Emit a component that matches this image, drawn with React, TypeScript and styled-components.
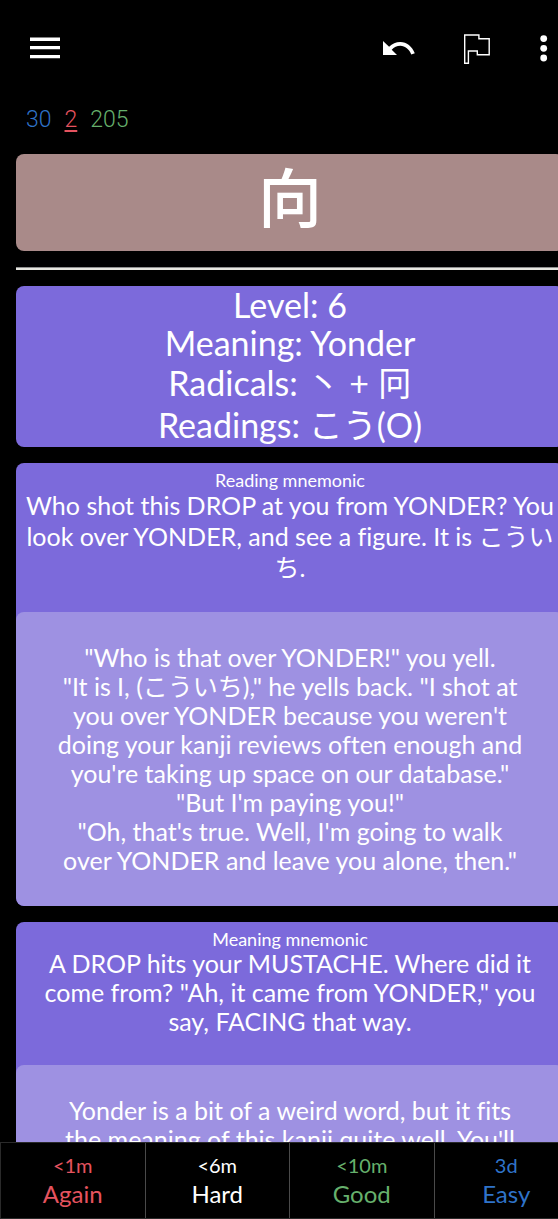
import React from "react";
import styled, { createGlobalStyle } from "styled-components";

const colors = {
  page: "#000000",
  text: "#ffffff",
  kanji: "#a98a89",
  card: "#7c6adb",
  note: "#9e91e2",
  red: "#e5535f",
  green: "#66b06c",
  blue: "#2f73c9",
  divider: "#4a4a4a",
};

const GlobalStyle = createGlobalStyle`
  * { box-sizing: border-box; }
  body {
    margin: 0;
    background: ${colors.page};
    color: ${colors.text};
    font-family: Lato, "Noto Sans CJK JP", sans-serif;
    font-variant-ligatures: none;
  }
`;

const Screen = styled.div`
  display: flex;
  flex-direction: column;
  height: 100vh;
  overflow: hidden;
`;

const Toolbar = styled.header`
  display: flex;
  align-items: center;
  justify-content: space-between;
  flex: none;
  height: 96px;
  padding-left: 20px;
`;

const Actions = styled.div`
  display: flex;
  align-items: center;
  gap: 28px;
`;

const IconButton = styled.button<{ $narrow?: boolean }>`
  display: flex;
  align-items: center;
  justify-content: center;
  width: ${({ $narrow }) => ($narrow ? 28 : 50)}px;
  height: 48px;
  padding: 0;
  border: 0;
  background: none;
  color: inherit;
  cursor: pointer;
`;

const Counts = styled.div`
  display: flex;
  flex: none;
  gap: 13px;
  height: 58px;
  padding: 9px 26px 0;
  font-family: Roboto, sans-serif;
  font-size: 23px;
  font-weight: 300;
  line-height: 30px;
`;

const Count = styled.span<{ $color: string; $current?: boolean }>`
  color: ${({ $color }) => $color};
  text-decoration: ${({ $current }) => ($current ? "underline" : "none")};
  text-underline-offset: 3px;
`;

const CardArea = styled.main`
  flex: 1;
  min-height: 0;
  margin: 0 -6px 0 16px;
  overflow-y: auto;
  scrollbar-width: none;
  text-align: center;
`;

const KanjiCard = styled.h1`
  height: 97px;
  margin: 0;
  border-radius: 8px;
  background: ${colors.kanji};
  font-family: "Noto Sans CJK JP", sans-serif;
  font-size: 64px;
  font-weight: 500;
  line-height: 80px;
`;

const Divider = styled.hr`
  height: 3px;
  margin: 16px 0;
  border: 0;
  border-top: 1px solid #8f8f8f;
  background: #e6e6e0;
`;

const Card = styled.section`
  margin-bottom: 16px;
  border-radius: 8px;
  background: ${colors.card};
  overflow: hidden;
`;

const Facts = styled.div`
  padding-bottom: 1px;
`;

const Fact = styled.p<{ $tall?: boolean }>`
  margin: 0;
  font-size: 34px;
  line-height: ${({ $tall }) => ($tall ? 42 : 38)}px;
`;

const Mnemonic = styled.div`
  padding: 7px 0 29px;
`;

const Label = styled.h2`
  margin: 0;
  font-size: 18px;
  font-weight: 400;
  line-height: 20px;
`;

const Text = styled.p<{ $line?: number }>`
  margin: 0;
  font-size: 25px;
  line-height: ${({ $line = 29 }) => $line}px;
  white-space: nowrap;
`;

const Note = styled.div`
  padding: 31px 0;
  border-radius: 8px;
  background: ${colors.note};
`;

const AnswerBar = styled.footer`
  display: grid;
  grid-template-columns: repeat(4, 1fr);
  flex: none;
  height: 77px;
  margin-right: -22px;
  border: 1px solid #2a2a2a;
`;

const Answer = styled.button<{ $color: string }>`
  display: flex;
  flex-direction: column;
  align-items: center;
  padding: 8px 0 0;
  border: 0;
  border-right: 1px solid ${colors.divider};
  background: none;
  color: ${({ $color }) => $color};
  font-family: inherit;
  cursor: pointer;
`;

const Interval = styled.span`
  font-size: 20px;
  line-height: 28px;
`;

const Grade = styled.span`
  font-size: 24px;
  line-height: 30px;
`;

const Lines = ({ lines }: { lines: string[] }) => (
  <>
    {lines.map((line, index) => (
      <React.Fragment key={line}>
        {index > 0 && <br />}
        {line}
      </React.Fragment>
    ))}
  </>
);

const readingHint = [
  "Who shot this DROP at you from YONDER? You",
  "look over YONDER, and see a figure. It is こうい",
  "ち.",
];

const readingNote = [
  '"Who is that over YONDER!" you yell.',
  '"It is I, (こういち)," he yells back. "I shot at',
  "you over YONDER because you weren't",
  "doing your kanji reviews often enough and",
  "you're taking up space on our database.\"",
  '"But I\'m paying you!"',
  "\"Oh, that's true. Well, I'm going to walk",
  'over YONDER and leave you alone, then."',
];

const meaningHint = [
  "A DROP hits your MUSTACHE. Where did it",
  'come from? "Ah, it came from YONDER," you',
  "say, FACING that way.",
];

const meaningNote = [
  "Yonder is a bit of a weird word, but it fits",
  "the meaning of this kanji quite well. You'll",
];

const answers = [
  { interval: "<1m", grade: "Again", color: colors.red },
  { interval: "<6m", grade: "Hard", color: colors.text },
  { interval: "<10m", grade: "Good", color: colors.green },
  { interval: "3d", grade: "Easy", color: colors.blue },
];

export default function App() {
  return (
    <Screen>
      <GlobalStyle />
      <Toolbar>
        <IconButton aria-label="Menu">
          <svg width="30" height="22" viewBox="0 0 30 22" fill="currentColor">
            <path d="M0 .5h30v3.500H0zM0 9h30v3.300H0zM0 18h30v3.300H0z" />
          </svg>
        </IconButton>
        <Actions>
          <IconButton aria-label="Undo">
            <svg width="34" height="14" viewBox="0 0 34 14" fill="currentColor">
              <path d="M1 0v14h14l-5.300-5.300C12 6.300 15 4.800 18.300 4.800c5 0 8.800 3.500 11 8.600l3.500-1.200C30 5.500 24.800 1 18.300 1 14 1 10.200 2.800 7.100 5.800z" />
            </svg>
          </IconButton>
          <IconButton aria-label="Flag">
            <svg width="28" height="32" viewBox="0 0 28 32" fill="none" stroke="currentColor" strokeWidth="1.400">
              <path d="M1.700 3h14.200v3.800h10.300v15.900H14.300V19H5.400v12.200H1.700z" />
            </svg>
          </IconButton>
          <IconButton aria-label="More options" $narrow>
            <svg width="8" height="28" viewBox="0 0 8 28" fill="currentColor">
              <circle cx="3.700" cy="4.600" r="3.400" />
              <circle cx="3.700" cy="14.300" r="3.400" />
              <circle cx="3.700" cy="24" r="3.400" />
            </svg>
          </IconButton>
        </Actions>
      </Toolbar>
      <Counts>
        <Count $color={colors.blue}>30</Count>
        <Count $color={colors.red} $current>2</Count>
        <Count $color={colors.green}>205</Count>
      </Counts>
      <CardArea lang="ja">
        <KanjiCard>向</KanjiCard>
        <Divider />
        <Card>
          <Facts>
            <Fact>Level: 6</Fact>
            <Fact>Meaning: Yonder</Fact>
            <Fact $tall>Radicals: 丶 + 冋</Fact>
            <Fact $tall>Readings: こう(O)</Fact>
          </Facts>
        </Card>
        <Card>
          <Mnemonic>
            <Label>Reading mnemonic</Label>
            <Text $line={31}><Lines lines={readingHint} /></Text>
          </Mnemonic>
          <Note>
            <Text><Lines lines={readingNote} /></Text>
          </Note>
        </Card>
        <Card>
          <Mnemonic>
            <Label>Meaning mnemonic</Label>
            <Text><Lines lines={meaningHint} /></Text>
          </Mnemonic>
          <Note>
            <Text><Lines lines={meaningNote} /></Text>
          </Note>
        </Card>
      </CardArea>
      <AnswerBar>
        {answers.map(({ interval, grade, color }) => (
          <Answer key={grade} $color={color}>
            <Interval>{interval}</Interval>
            <Grade>{grade}</Grade>
          </Answer>
        ))}
      </AnswerBar>
    </Screen>
  );
}
